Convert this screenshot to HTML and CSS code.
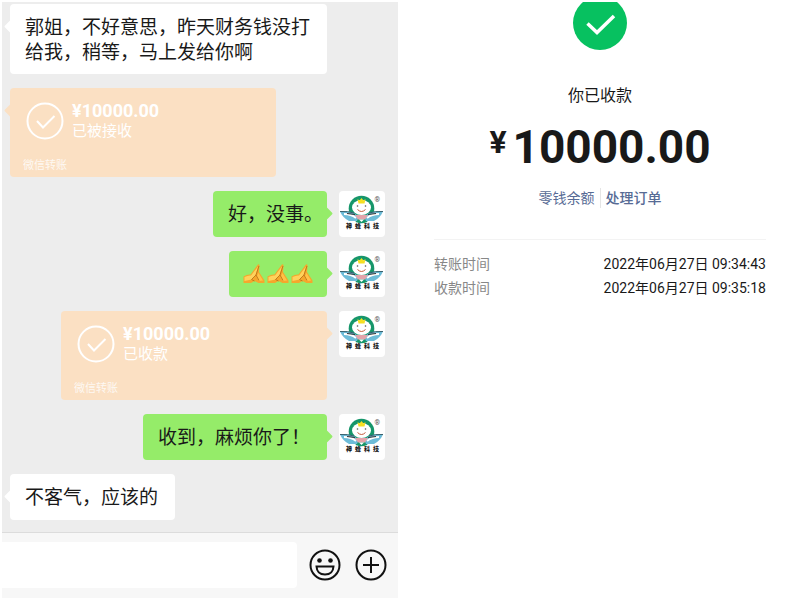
FILE: index.html
```html
<!DOCTYPE html>
<html lang="zh-CN">
<head>
<meta charset="utf-8">
<meta name="viewport" content="width=device-width, initial-scale=1">
<title>微信转账</title>
<link rel="stylesheet" href="styles.css">
</head>
<body>
<svg class="defs" aria-hidden="true">
  <defs>
    <symbol id="logo" viewBox="0 0 46 46">
      <circle cx="22.500" cy="17.500" r="12.800" fill="#16966a"/>
      <path d="M14 26h17l-3 5q-5.500 2.500-11 0z" fill="#16966a"/>
      <path d="M1 20.500q8-.5 13 1l6 4-2 4.500h-8Q4 27 1 20.500z" fill="#6dbcd8"/>
      <path d="M44 20.500q-8-.5-13 1l-6 4 2 4.500h8q6-3 9-9.500z" fill="#6dbcd8"/>
      <path d="M5 23q7 0 12 4M40 23q-7 0-12 4" fill="none" stroke="#fff" stroke-width="2"/>
      <path d="M1 20.500q8-.5 14 1.500M44 20.500q-8-.5-14 1.500" fill="none" stroke="#37606c" stroke-width="1"/>
      <path d="M8 22.500l8 1M37 22.500l-8 1" fill="none" stroke="#333" stroke-width="1.200"/>
      <ellipse cx="22.500" cy="16.500" rx="9.500" ry="7.500" fill="#fff"/>
      <path d="M18.500 8l2 1.500 2-2.500 2 2.500 2-1.500-1 4.500h-6z" fill="#f6df22"/>
      <circle cx="18.500" cy="15" r=".8" fill="#555"/>
      <circle cx="26.500" cy="15" r=".8" fill="#555"/>
      <path d="M18.500 18.500q4 4 8 0" fill="none" stroke="#c45b3b" stroke-width="1"/>
      <path d="M16 24h13l-3 4.500h-7z" fill="#e3a3aa"/>
      <path d="M20 28.500h5l-2.500 2.500z" fill="#fff"/>
    </symbol>
    <symbol id="hands" viewBox="0 0 21 20">
      <path d="M0 12.500Q4 10 7 10.500L14 1q1.500-1.500 2 .5l-.5 6.500 5.500 8.500V19h-6l-4-2-3.500 2H0z" fill="#f5a72c"/>
      <path d="M1 13q4-2 6.500-1.500L14.500 2.500 12 11l-4 4.500-7 1.500z" fill="#ffd25c"/>
      <path d="M15 9l4.500 7.500-4 .5-2.500-4z" fill="#ffc348"/>
      <path d="M15.500 2L12.500 11 8 15.500M12.500 11l3 5.500M8 15.500l3 1.500" fill="none" stroke="#c47a1b" stroke-width="1"/>
    </symbol>
    <symbol id="done" viewBox="0 0 38 38">
      <g fill="none" stroke="#fff" stroke-width="2">
        <circle cx="19" cy="19" r="17.500"/>
        <path d="M11 19l6 6.500L28.500 14"/>
      </g>
    </symbol>
  </defs>
</svg>
<main class="split">
  <section class="chat" aria-label="聊天">
    <div class="messages">
      <div class="row"><p class="bubble">郭姐，不好意思，昨天财务钱没打<br>给我，稍等，马上发给你啊</p></div>
      <div class="row">
        <article class="bubble transfer">
          <svg class="transfer-icon" aria-hidden="true"><use href="#done"/></svg>
          <div class="transfer-info"><strong>¥10000.00</strong><span>已被接收</span></div>
          <small>微信转账</small>
        </article>
      </div>
      <div class="row own">
        <p class="bubble ends-with-stop">好，没事。</p>
        <div class="avatar"><svg aria-hidden="true"><use href="#logo"/></svg><span class="mark">®</span><div class="brand"><span>神</span><span>蜂</span><span>科</span><span>技</span></div></div>
      </div>
      <div class="row own">
        <p class="bubble emoji"><svg aria-hidden="true"><use href="#hands"/></svg><svg aria-hidden="true"><use href="#hands"/></svg><svg aria-hidden="true"><use href="#hands"/></svg></p>
        <div class="avatar"><svg aria-hidden="true"><use href="#logo"/></svg><span class="mark">®</span><div class="brand"><span>神</span><span>蜂</span><span>科</span><span>技</span></div></div>
      </div>
      <div class="row own">
        <article class="bubble transfer">
          <svg class="transfer-icon" aria-hidden="true"><use href="#done"/></svg>
          <div class="transfer-info"><strong>¥10000.00</strong><span>已收款</span></div>
          <small>微信转账</small>
        </article>
        <div class="avatar"><svg aria-hidden="true"><use href="#logo"/></svg><span class="mark">®</span><div class="brand"><span>神</span><span>蜂</span><span>科</span><span>技</span></div></div>
      </div>
      <div class="row own">
        <p class="bubble">收到，麻烦你了！</p>
        <div class="avatar"><svg aria-hidden="true"><use href="#logo"/></svg><span class="mark">®</span><div class="brand"><span>神</span><span>蜂</span><span>科</span><span>技</span></div></div>
      </div>
      <div class="row"><p class="bubble">不客气，应该的</p></div>
    </div>
    <form class="composer">
      <input type="text" aria-label="消息">
      <button type="button" aria-label="表情">
        <svg viewBox="0 0 32 32"><circle cx="16" cy="16" r="14.500"/><circle class="eye" cx="10.500" cy="11.500" r="2.300"/><circle class="eye" cx="21.500" cy="11.500" r="2.300"/><path d="M7.500 17.500h17q-.5 8-8.500 8t-8.500-8z"/></svg>
      </button>
      <button type="button" aria-label="更多">
        <svg viewBox="0 0 32 32"><circle cx="16" cy="16" r="14.500"/><path d="M16 8v16M8 16h16"/></svg>
      </button>
    </form>
  </section>
  <section class="receipt" aria-label="收款详情">
    <div class="badge-clip"><svg viewBox="0 0 54 48" aria-hidden="true"><circle cx="27" cy="21" r="27" fill="#07c160"/><path d="M14.500 21.500l9.500 9L41 14" fill="none" stroke="#fff" stroke-width="3.500"/></svg></div>
    <h1>你已收款</h1>
    <p class="amount"><span>¥</span><strong>10000.00</strong></p>
    <nav><a href="#balance">零钱余额</a><a class="order" href="#order">处理订单</a></nav>
    <dl>
      <div><dt>转账时间</dt><dd>2022年06月27日 09:34:43</dd></div>
      <div><dt>收款时间</dt><dd>2022年06月27日 09:35:18</dd></div>
    </dl>
  </section>
</main>
</body>
</html>
```
FILE: styles.css
```css
* { box-sizing: border-box; }

body {
  margin: 0;
  background: #fff;
  color: #191919;
  font-family: Roboto, "Noto Sans CJK SC", sans-serif;
}

p, h1, dl, dd { margin: 0; }

.defs {
  position: absolute;
  width: 0;
  height: 0;
}

.split {
  display: grid;
  grid-template-columns: 1fr 1fr;
  min-height: 100vh;
  padding: 2px 0;
}

.chat {
  display: flex;
  flex-direction: column;
  margin: 0 2px;
  background: #ededed;
}

.messages {
  display: flex;
  flex: 1;
  flex-direction: column;
  gap: 14px;
  padding: 2px 13px 12px 8px;
}

.row {
  display: flex;
  align-items: flex-start;
  gap: 12px;
}

.own { justify-content: flex-end; }

.bubble {
  position: relative;
  padding: 11px 17px 9px 15px;
  min-height: 46px;
  border-radius: 4px;
  background: #fff;
  font-size: 19px;
  line-height: 25px;
}

.bubble::before {
  content: "";
  position: absolute;
  top: 18px;
  left: -4px;
  width: 9px;
  height: 9px;
  border-radius: 1px;
  background: inherit;
  transform: rotate(45deg);
}

.own .bubble { background: #95ec69; }

.own .bubble::before {
  right: -4px;
  left: auto;
}

.bubble.ends-with-stop { padding-right: 4px; }

.bubble.emoji {
  display: flex;
  align-items: center;
  gap: 2px;
  height: 46px;
  padding: 0 14px;
}

.emoji svg {
  width: 22px;
  height: 20px;
}

.row .bubble.transfer {
  display: grid;
  grid-template-columns: 38px 1fr;
  column-gap: 8px;
  width: 266px;
  padding: 12px 16px 4px;
  background: #fbe0c3;
  color: #fff;
}

.transfer-icon {
  width: 38px;
  height: 38px;
  margin-top: 2px;
}

.transfer-info {
  display: flex;
  flex-direction: column;
  height: 59px;
}

.transfer-info strong {
  font-size: 18px;
  font-weight: 700;
  line-height: 21px;
}

.transfer-info span {
  font-size: 15px;
  line-height: 20px;
}

.transfer small {
  grid-column: 1 / -1;
  margin-left: -3px;
  font-size: 11px;
  line-height: 14px;
  opacity: .8;
}

.avatar {
  position: relative;
  width: 46px;
  height: 46px;
  border-radius: 4px;
  background: #fff;
}

.avatar svg {
  display: block;
  width: 46px;
  height: 46px;
}

.mark {
  position: absolute;
  top: 5px;
  right: 5px;
  color: #555;
  font-size: 7px;
  line-height: 8px;
}

.brand {
  position: absolute;
  right: 6px;
  bottom: 7px;
  left: 7px;
  display: flex;
  justify-content: space-between;
  font-size: 6px;
  font-weight: 900;
  line-height: 8px;
}

.composer {
  display: flex;
  align-items: center;
  gap: 14px;
  padding: 9px 11px 10px 0;
  border-top: 1px solid #dcdcdc;
  background: #f7f7f7;
}

.composer input {
  flex: 1;
  min-width: 0;
  height: 46px;
  margin-right: -2px;
  border: 0;
  border-radius: 0 4px 4px 0;
  background: #fff;
  font-size: 19px;
}

.composer button {
  width: 32px;
  height: 32px;
  padding: 0;
  border: 0;
  background: none;
}

.composer svg {
  display: block;
  fill: none;
  stroke: #111;
  stroke-width: 2;
}

.composer .eye {
  fill: #111;
  stroke: none;
}

.receipt {
  display: flex;
  flex-direction: column;
  align-items: center;
  padding: 0 34px;
}

.badge-clip svg {
  display: block;
  width: 54px;
  height: 48px;
}

h1 {
  margin-top: 34px;
  font-size: 16px;
  font-weight: 400;
  line-height: 24px;
}

.amount {
  display: flex;
  align-items: flex-start;
  gap: 6px;
  margin-top: 11px;
}

.amount strong {
  font-size: 46px;
  font-weight: 700;
  line-height: 56px;
}

.amount span {
  font-size: 32px;
  font-weight: 700;
  line-height: 46px;
}

nav {
  display: flex;
  margin-top: 13px;
  font-size: 14px;
  line-height: 20px;
}

nav a {
  padding: 0 5px;
  color: #576b95;
  text-decoration: none;
}

nav .order {
  border-left: 1px solid #e5e5e5;
  font-weight: 500;
}

dl {
  align-self: stretch;
  margin-top: 31px;
  padding-top: 12px;
  border-top: 1px solid #f3f3f3;
  font-size: 14px;
  line-height: 24px;
}

dl div {
  display: flex;
  justify-content: space-between;
}

dt { color: #888; }
```
